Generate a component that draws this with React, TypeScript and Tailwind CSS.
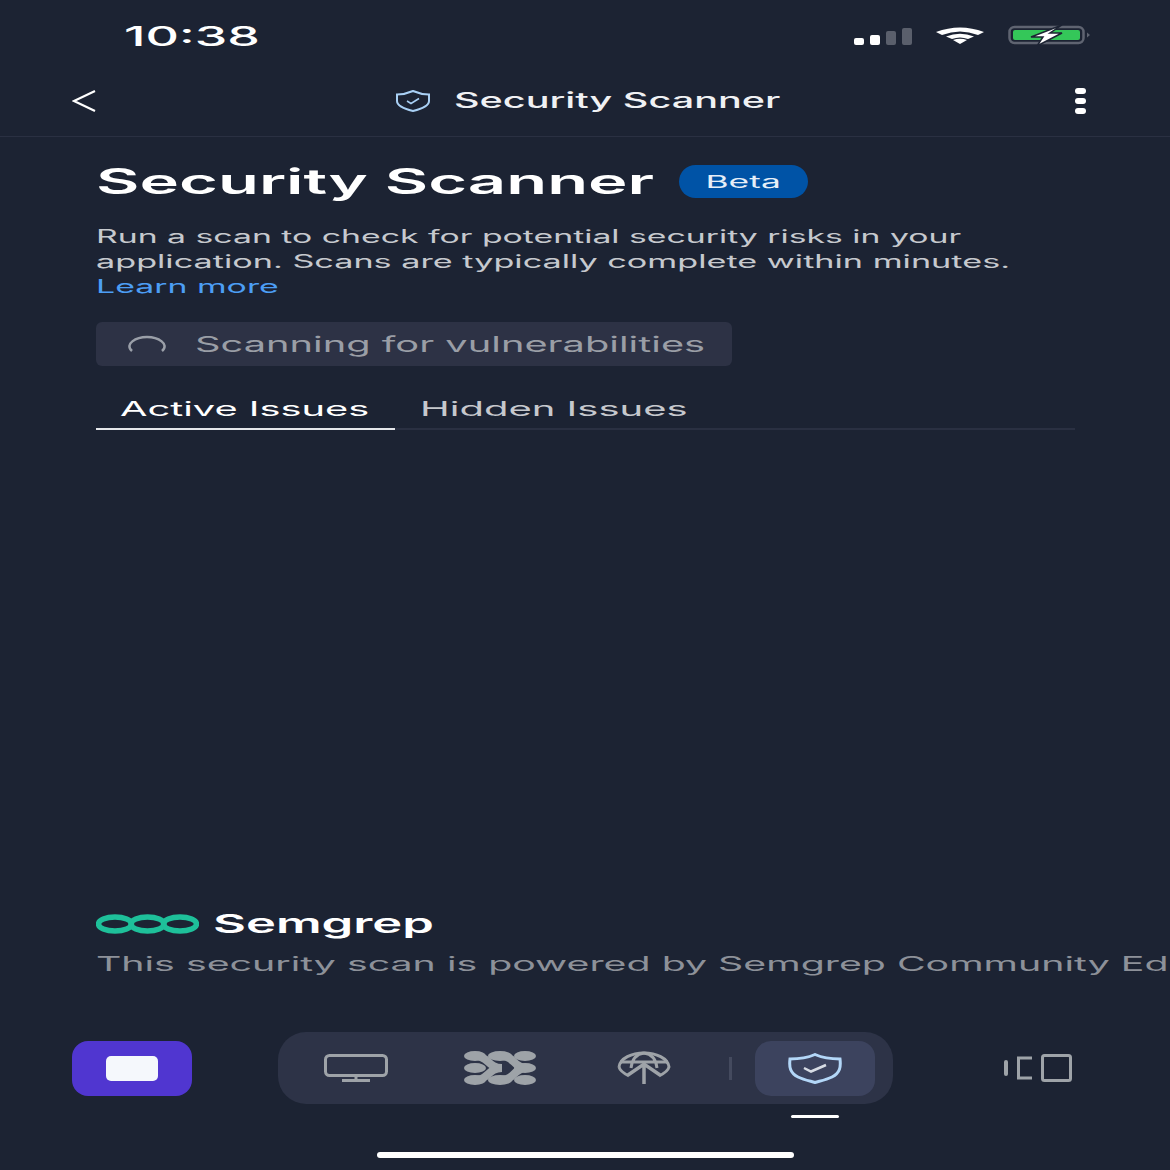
import clsx from "clsx";
import { ReactNode } from "react";

const Wide = ({ children, className }: { children: ReactNode; className?: string }) => {
  return (
    <span className={clsx("block origin-left whitespace-nowrap font-['Inter',sans-serif]", className)}>
      {children}
    </span>
  );
};

const StatusBar = () => {
  return (
    <div className="flex h-[70px] items-center justify-between pl-[124px] pr-[80px]">
      <Wide className="mt-[2px] w-[133px] text-[27px] font-medium leading-none text-white scale-x-[1.92]">10:38</Wide>
      <div className="flex items-center">
        <div className="mt-[2px] flex h-[18px] items-end gap-[6px]">
          <div className="h-[7px] w-[10px] rounded-[2px] bg-white" />
          <div className="h-[10px] w-[10px] rounded-[2px] bg-white" />
          <div className="h-[14px] w-[10px] rounded-[2px] bg-[#5a5f6c]" />
          <div className="h-[17px] w-[10px] rounded-[2px] bg-[#5a5f6c]" />
        </div>
        <svg className="ml-[23px]" width="50" height="18" viewBox="0 0 50 18">
          <path d="M1 6 Q25 -3 49 6 L43 9 Q25 2 7 9 Z" fill="#fff" />
          <path d="M11 10.500 Q25 5 39 10.500 L33 13 Q25 10 17 13 Z" fill="#fff" />
          <path d="M18 14 Q25 11.500 32 14 L25 18 Z" fill="#fff" />
        </svg>
        <svg className="ml-[23px]" width="82" height="22" viewBox="0 0 82 22">
          <rect x="1.500" y="3" width="74" height="16" rx="5" fill="none" stroke="#5f6471" strokeWidth="2.500" />
          <rect x="5" y="6" width="67" height="10" rx="2" fill="#34c759" />
          <path d="M79 8.500 L82 11 L79 13.500 Z" fill="#5f6471" />
          <path d="M54 1 L23 13 H35 L29 22 L54 9 H42 Z" fill="#fff" stroke="#1c2333" strokeWidth="1.500" />
        </svg>
      </div>
    </div>
  );
};

const NavBar = () => {
  return (
    <div className="flex h-[67px] items-center border-b border-[#2a3042] pb-[5px] pl-[72px] pr-[84px]">
      <svg width="24" height="22" viewBox="0 0 24 22" fill="none" stroke="#fff" strokeWidth="2.200">
        <path d="M23 1 L2 11 L23 21" />
      </svg>
      <div className="ml-[299px] flex items-center">
        <svg width="36" height="22" viewBox="0 0 36 22" fill="none">
          <path d="M18 1 Q26 4.500 34 4.500 V11 Q34 17 18 21 Q2 17 2 11 V4.500 Q10 4.500 18 1 Z" stroke="#a9d0f5" strokeWidth="2" />
          <path d="M12 11 L16 13.500 L24 8.500" stroke="#a9d0f5" strokeWidth="1.500" />
        </svg>
        <Wide className="ml-[23px] w-[325px] text-[21px] font-medium leading-none text-[#f0f1f4] scale-x-[1.885]">
          Security Scanner
        </Wide>
      </div>
      <div className="ml-auto flex flex-col gap-[4px]">
        <div className="h-[6px] w-[11px] rounded-full bg-white" />
        <div className="h-[6px] w-[11px] rounded-full bg-white" />
        <div className="h-[6px] w-[11px] rounded-full bg-white" />
      </div>
    </div>
  );
};

const Spinner = () => {
  return (
    <svg width="40" height="18" viewBox="0 0 40 18" fill="none">
      <path d="M5 16 C-3 9 9 2 20 2 C31 2 43 9 35 16" stroke="#9a9fa8" strokeWidth="2.500" />
    </svg>
  );
};

const Tabs = () => {
  return (
    <div className="mt-[21px] flex h-[43px] w-[979px] border-b-2 border-[#2a3042]">
      <div className="-mb-[2px] w-[299px] border-b-2 border-[#e4e6ea] pl-[24px] pt-[10px]">
        <Wide className="text-[20px] font-normal leading-[24px] text-white scale-x-[1.99]">Active Issues</Wide>
      </div>
      <div className="pl-[25px] pt-[10px]">
        <Wide className="text-[20px] font-normal leading-[24px] text-[#c6c8cd] scale-x-[2]">Hidden Issues</Wide>
      </div>
    </div>
  );
};

const SemgrepLogo = () => {
  return (
    <svg width="103" height="20" viewBox="0 0 103 20" fill="none" stroke="#1ec09a" strokeWidth="5.500">
      <ellipse cx="19" cy="10" rx="16.500" ry="7" />
      <ellipse cx="51.500" cy="10" rx="16.500" ry="7" />
      <ellipse cx="84" cy="10" rx="16.500" ry="7" />
    </svg>
  );
};

const MonitorIcon = () => {
  return (
    <svg width="64" height="28" viewBox="0 0 64 28" fill="none" stroke="#9ea3a8" strokeWidth="3">
      <rect x="1.500" y="1.500" width="61" height="20" rx="4" />
      <path d="M32 22 V26.500 M18 26.500 H46" />
    </svg>
  );
};

const SemgrepNavIcon = () => {
  return (
    <svg width="72" height="34" viewBox="0 0 72 34" fill="#9ea3a8">
      <ellipse cx="11" cy="5" rx="11" ry="5" />
      <ellipse cx="36" cy="5" rx="12" ry="5" />
      <ellipse cx="61" cy="5" rx="11" ry="5" />
      <ellipse cx="11" cy="17" rx="11" ry="5" />
      <ellipse cx="61" cy="17" rx="11" ry="5" />
      <ellipse cx="11" cy="29" rx="11" ry="5" />
      <ellipse cx="36" cy="29" rx="12" ry="5" />
      <ellipse cx="61" cy="29" rx="11" ry="5" />
      <g fill="none" stroke="#9ea3a8" strokeWidth="8">
        <path d="M12 5 C24 5 24 17 38 17" />
        <path d="M12 29 C24 29 24 17 38 17" />
        <path d="M38 5 C50 5 50 17 62 17" />
        <path d="M38 29 C50 29 50 17 62 17" />
      </g>
    </svg>
  );
};

const GlobeArrowIcon = () => {
  return (
    <svg width="54" height="34" viewBox="0 0 54 34" fill="none" stroke="#9ea3a8" strokeWidth="3">
      <path d="M2 16 C3 7 15 2 27 2 C39 2 51 7 52 16 C51 20 48 22 42 25" />
      <path d="M2 16 C3 20 6 22 12 25" />
      <path d="M27 2 C19 3 15 9 14 17 M27 2 C35 3 39 9 40 17 M3 11 H51" />
      <path d="M27 33 V13 M11 24 L27 13 L43 24" strokeWidth="3.500" />
    </svg>
  );
};

const ShieldIcon = () => {
  return (
    <svg width="54" height="31" viewBox="0 0 54 31" fill="none">
      <path d="M27 1.500 C35 5 42 6 52 6 C53 14 52 20 44 24 C38 27 32 28 27 29.500 C22 28 16 27 10 24 C2 20 1 14 2 6 C12 6 19 5 27 1.500 Z" stroke="#b3d7f8" strokeWidth="3" />
      <path d="M16 15 L23 18.500 L38 12" stroke="#d7dce4" strokeWidth="2.500" />
    </svg>
  );
};

const PanesIcon = () => {
  return (
    <svg width="68" height="28" viewBox="0 0 68 28" fill="none" stroke="#9ea3a8" strokeWidth="3">
      <path d="M2 8 V20" strokeWidth="4" strokeLinecap="round" />
      <path d="M28 4 H14.500 V24 H28" />
      <rect x="38.500" y="1.500" width="28" height="25" rx="2" />
    </svg>
  );
};

const BottomBar = () => {
  return (
    <div className="flex flex-col">
      <div className="flex items-center pl-[72px]">
        <div className="flex h-[55px] w-[120px] items-center justify-center rounded-[16px] bg-[#5036d0]">
          <div className="h-[25px] w-[52px] rounded-[5px] bg-[#f5f8fc]" />
        </div>
        <div className="ml-[86px] flex h-[72px] w-[615px] items-center rounded-[28px] bg-[#2d3347] pl-[46px] pr-[18px]">
          <MonitorIcon />
          <div className="ml-[76px]">
            <SemgrepNavIcon />
          </div>
          <div className="ml-[81px]">
            <GlobeArrowIcon />
          </div>
          <div className="ml-[58px] h-[23px] w-[3px] bg-[#444a5e]" />
          <div className="ml-[23px] flex h-[55px] w-[120px] items-center justify-center rounded-[16px] bg-[#3c435e]">
            <ShieldIcon />
          </div>
        </div>
        <div className="ml-[111px]">
          <PanesIcon />
        </div>
      </div>
      <div className="ml-[791px] mt-[11px] h-[3px] w-[48px] rounded-full bg-white" />
      <div className="ml-[377px] mt-[34px] h-[6px] w-[417px] rounded-full bg-white" />
      <div className="h-[12px]" />
    </div>
  );
};

export default function App() {
  return (
    <div className="flex h-[1170px] w-[1170px] flex-col overflow-hidden bg-[#1c2333]">
      <StatusBar />
      <NavBar />
      <div className="flex flex-1 flex-col pl-[96px]">
        <div className="mt-[28px] flex h-[33px] items-center">
          <Wide className="w-[583px] text-[35px] font-semibold leading-none text-white scale-x-[1.91]">
            Security Scanner
          </Wide>
          <div className="flex h-[33px] w-[129px] items-center justify-center rounded-full bg-[#0053a6]">
            <span className="mt-[2px] inline-block scale-x-[2.08] font-['Inter',sans-serif] text-[17px] text-[#e6eef8]">Beta</span>
          </div>
        </div>
        <div className="mt-[26px] text-[18px] leading-[25px] text-[#c6c9ce]">
          <Wide className="scale-x-[1.875]">Run a scan to check for potential security risks in your</Wide>
          <Wide className="scale-x-[1.9]">application. Scans are typically complete within minutes.</Wide>
          <Wide className="text-[#4c9ef5] scale-x-[1.88]">Learn more</Wide>
        </div>
        <div className="mt-[23px] flex h-[44px] w-[636px] items-center rounded-[6px] bg-[#2d3245] pl-[31px]">
          <Spinner />
          <Wide className="ml-[28px] text-[21px] leading-none text-[#9a9ea6] scale-x-[1.895]">
            Scanning for vulnerabilities
          </Wide>
        </div>
        <Tabs />
        <div className="mt-auto flex h-[20px] items-center">
          <SemgrepLogo />
          <Wide className="ml-[14px] text-[26px] font-semibold leading-none text-white scale-x-[1.95]">Semgrep</Wide>
        </div>
        <Wide className="mb-[56px] mt-[18px] text-[20px] leading-[24px] text-[#8d9199] scale-x-[1.965]">
          This security scan is powered by Semgrep Community Edition.
        </Wide>
      </div>
      <BottomBar />
    </div>
  );
}
